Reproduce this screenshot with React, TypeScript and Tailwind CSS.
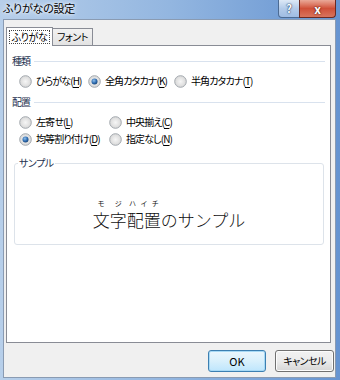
function Radio({ checked }: { checked?: boolean }) {
  return (
    <svg width="13" height="13" viewBox="0 0 13 13" className="shrink-0">
      <defs>
        <radialGradient id="rg" cx="0.5" cy="0.5" r="0.6">
          <stop offset="0" stopColor="#f6f6f6" />
          <stop offset="1" stopColor="#d2d2d2" />
        </radialGradient>
        <radialGradient id="dot" cx="0.4" cy="0.35" r="0.7">
          <stop offset="0" stopColor="#8fc0ec" />
          <stop offset="0.6" stopColor="#2e6bb0" />
          <stop offset="1" stopColor="#17406f" />
        </radialGradient>
      </defs>
      <circle cx="6.5" cy="6.5" r="5.8" fill="url(#rg)" stroke="#a3a8ae" strokeWidth="1" />
      {checked && <circle cx="6.5" cy="6.5" r="3" fill="url(#dot)" />}
    </svg>
  );
}

function Option({
  label,
  mnemonic,
  checked,
  width,
}: {
  label: string;
  mnemonic: string;
  checked?: boolean;
  width: string;
}) {
  return (
    <div className={`flex shrink-0 items-center gap-[4px] ${width}`}>
      <Radio checked={checked} />
      <span className="whitespace-nowrap">
        {label}(<span className="underline underline-offset-2">{mnemonic}</span>)
      </span>
    </div>
  );
}

function Header({ text }: { text: string }) {
  return (
    <div className="flex h-[16px] items-center gap-[4px] pl-[5px] pr-[5px]">
      <span className="text-[#1e3250]">{text}</span>
      <div className="h-px flex-1 bg-[#d9e2ee]" />
    </div>
  );
}

export default function App() {
  return (
    <div className="flex h-[380px] w-[340px] flex-col whitespace-nowrap bg-gradient-to-r from-[#b7cfea] via-[#93b6e0] to-[#6694d1] font-['Noto_Sans_CJK_JP','Liberation_Sans',sans-serif] text-[10px] leading-none tracking-[-0.9px] text-black [font-feature-settings:'palt']">
      {/* title bar */}
      <div className="flex h-[19px] items-start justify-between">
        <span className="pl-[3px] pt-[3px] text-[11px] tracking-[-0.2px] [text-shadow:0_0_6px_#fff,0_0_3px_#fff]">
          ふりがなの設定
        </span>
        <div className="flex pr-[4px]">
          <div className="flex h-[18px] w-[22px] items-center justify-center rounded-bl-[4px] border border-t-0 border-[#4c6b93] bg-gradient-to-b from-[#dde9f6] via-[#b3cbe9] to-[#9fbce3] text-[11px] font-bold tracking-normal text-white [text-shadow:0_0_2px_#1d3a5f,0_0_1px_#1d3a5f]">
            ?
          </div>
          <div className="-ml-px flex h-[18px] w-[37px] items-center justify-center rounded-br-[4px] border border-t-0 border-[#6b2a22] bg-gradient-to-b from-[#e9a898] via-[#cf4f38] to-[#d8745d] text-[12px] font-bold tracking-normal text-white [text-shadow:0_0_2px_#5a1a12,0_0_1px_#5a1a12]">
            x
          </div>
        </div>
      </div>

      {/* client */}
      <div className="mb-[2px] ml-[3px] mr-[4px] flex flex-1 flex-col border border-[#8a9bb2] bg-[#f0f0f0]">
        <div className="pl-[2px] pt-[7px]">
          {/* tabs */}
          <div className="flex items-end">
            <div className="relative z-10 -mb-px flex h-[19px] w-[47px] items-center justify-center border border-b-0 border-[#898c95] bg-white tracking-[-0.4px]">
              <span className="border border-dotted border-[#444] px-[2px] py-[1px]">ふりがな</span>
            </div>
            <div className="-ml-px flex h-[17px] w-[41px] items-center justify-center border border-b-0 border-[#898c95] bg-gradient-to-b from-[#f2f2f2] to-[#e3e3e3] tracking-[-0.4px]">
              フォント
            </div>
          </div>

          {/* panel */}
          <div className="h-[298px] w-[325px] border border-[#898c95] bg-white pt-[7px]">
            <Header text="種類" />
            <div className="mt-[4px] flex h-[16px] items-center pl-[12px]">
              <Option label="ひらがな" mnemonic="H" width="w-[69px]" />
              <Option label="全角カタカナ" mnemonic="K" checked width="w-[86px]" />
              <Option label="半角カタカナ" mnemonic="T" width="w-[100px]" />
            </div>
            <div className="mt-[5px]">
              <Header text="配置" />
            </div>
            <div className="mt-[4px] flex h-[16px] items-center pl-[12px]">
              <Option label="左寄せ" mnemonic="L" width="w-[90px]" />
              <Option label="中央揃え" mnemonic="C" width="w-[100px]" />
            </div>
            <div className="mt-px flex h-[16px] items-center pl-[12px]">
              <Option label="均等割り付け" mnemonic="D" checked width="w-[90px]" />
              <Option label="指定なし" mnemonic="N" width="w-[100px]" />
            </div>

            {/* sample group */}
            <div className="relative ml-[7px] mt-[16px] h-[82px] w-[310px] rounded-[3px] border border-[#dde3ea]">
              <span className="absolute -top-[6px] left-[3px] bg-white px-px tracking-[-0.5px] text-[#1e3250]">サンプル</span>
              <div className="flex flex-col items-center pt-[36px] font-light tracking-normal text-[#111]">
                <div className="flex items-end">
                  <div className="flex w-[34px] flex-col gap-[4px]">
                    <div className="flex h-[7px] justify-around text-[7px] font-normal">
                      <span>モ</span>
                      <span>ジ</span>
                    </div>
                    <span className="text-[17px] [font-feature-settings:normal]">文字</span>
                  </div>
                  <div className="flex w-[34px] flex-col gap-[4px]">
                    <div className="flex h-[7px] justify-around text-[7px] font-normal">
                      <span>ハ</span>
                      <span>イ</span>
                      <span>チ</span>
                    </div>
                    <span className="text-[17px] [font-feature-settings:normal]">配置</span>
                  </div>
                  <span className="text-[17px] [font-feature-settings:normal]">のサンプル</span>
                </div>
              </div>
            </div>
          </div>

          {/* buttons */}
          <div className="mt-[7px] flex justify-end gap-[9px] pr-[1px]">
            <button className="flex h-[22px] w-[58px] items-center justify-center rounded-[3px] border border-[#3c7fb1] bg-gradient-to-b from-[#eaf6fd] via-[#d9f0fc] to-[#bee6fd] text-[11px] tracking-normal shadow-[inset_0_0_0_1px_#a7d9f5]">
              OK
            </button>
            <button className="flex h-[22px] w-[59px] items-center justify-center rounded-[3px] border border-[#707070] bg-gradient-to-b from-[#f2f2f2] via-[#ebebeb] to-[#d6d6d6] tracking-[-0.6px] shadow-[inset_0_0_0_1px_#fcfcfc]">
              キャンセル
            </button>
          </div>
        </div>
      </div>
    </div>
  );
}
